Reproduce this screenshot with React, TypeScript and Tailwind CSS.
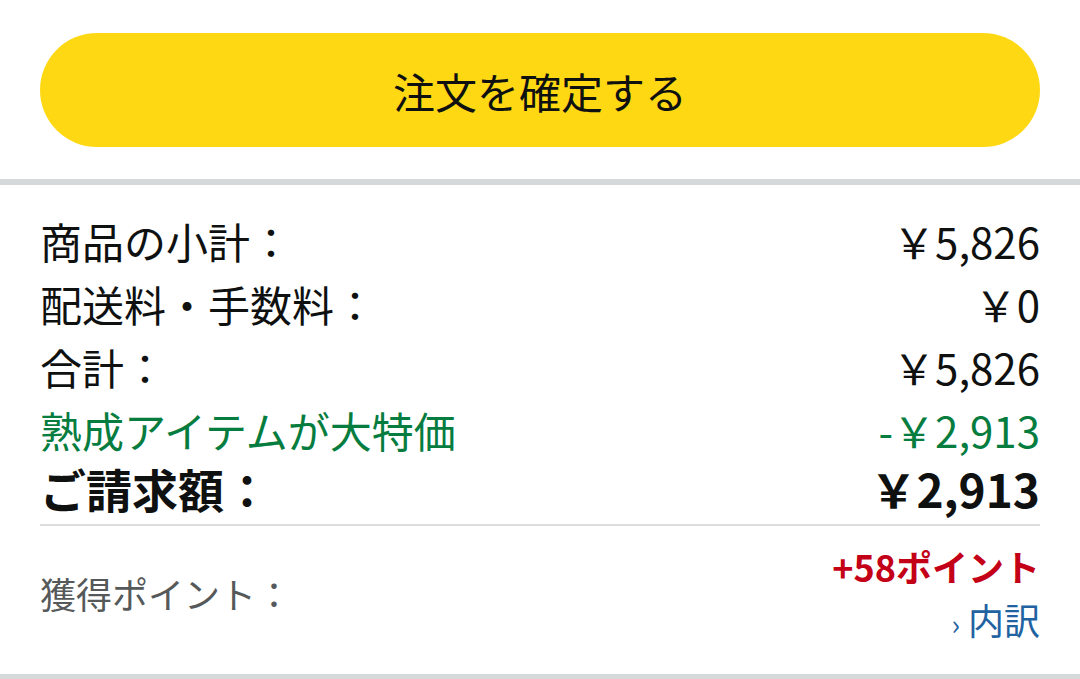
const font = { fontFamily: '"Noto Sans CJK JP", "Noto Sans", sans-serif' };

const Row = ({ label, value, className }: { label: string; value: string; className: string }) => (
  <div className={`flex items-center justify-between ${className}`}>
    <span>{label}</span>
    <span>{value}</span>
  </div>
);

export default function App() {
  return (
    <div className="w-[1080px] h-[679px] bg-white overflow-hidden text-[#0f1111]" style={font}>
      <div className="px-10 pt-[33px] pb-8">
        <button className="w-full h-[114px] rounded-full bg-[#ffd814] text-[42px] text-[#0f1111]">
          注文を確定する
        </button>
      </div>
      <div className="h-[6px] bg-[#d5d9d9]" />
      <div className="px-10 pt-[24px]">
        <Row label="商品の小計：" value="￥5,826" className="h-[63px] text-[42px]" />
        <Row label="配送料・手数料：" value="￥0" className="h-[63px] text-[42px]" />
        <Row label="合計：" value="￥5,826" className="h-[63px] text-[42px]" />
        <Row label="熟成アイテムが大特価" value="-￥2,913" className="h-[63px] text-[42px] text-[#067d3f]" />
        <Row label="ご請求額：" value="￥2,913" className="h-[54px] text-[46px] font-bold" />
        <div className="mt-[9px] h-[2px] bg-[#dddddd]" />
        <div className="flex items-center justify-between pt-[14px] pb-[28px]">
          <span className="text-[36px] text-[#565959]">獲得ポイント：</span>
          <div className="flex flex-col items-end">
            <span className="h-[53px] leading-[53px] text-[36px] font-bold text-[#c40018]">+58ポイント</span>
            <span className="h-[53px] leading-[53px] text-[36px] text-[#2162a1]">
              <span className="text-[28px] mr-2">›</span>内訳
            </span>
          </div>
        </div>
      </div>
      <div className="h-[6px] bg-[#d5d9d9]" />
    </div>
  );
}
